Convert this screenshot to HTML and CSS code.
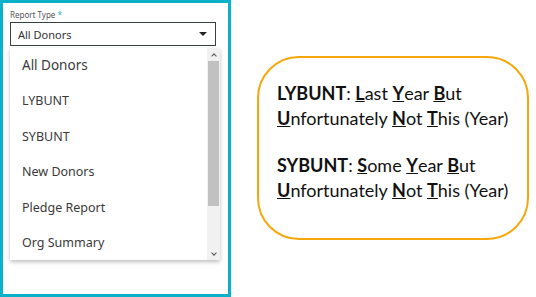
FILE: index.html
```html
<!DOCTYPE html>
<html lang="en">
<head>
    <meta charset="UTF-8">
    <meta name="viewport" content="width=device-width, initial-scale=1.0">
    <title>Report Type</title>
    <link rel="stylesheet" href="styles.css">
</head>
<body>

<div class="page">
    <!-- Report type picker -->
    <div class="panel">
        <label class="field-label">Report Type <span class="req">*</span></label>
        <div class="select">
            <span>All Donors</span>
            <span class="caret"></span>
        </div>
        <div class="menu">
            <ul class="options">
                <li>All Donors</li>
                <li>LYBUNT</li>
                <li>SYBUNT</li>
                <li>New Donors</li>
                <li>Pledge Report</li>
                <li>Org Summary</li>
            </ul>
            <div class="scrollbar">
                <div class="arrow up"></div>
                <div class="track"><div class="thumb"></div></div>
                <div class="arrow down"></div>
            </div>
        </div>
    </div>

    <!-- Acronym legend -->
    <div class="note">
        <div class="note-box">
            <p><b>LYBUNT</b>: <b><u>L</u></b>ast <b><u>Y</u></b>ear <b><u>B</u></b>ut<br>
               <b><u>U</u></b>nfortunately <b><u>N</u></b>ot <b><u>T</u></b>his (Year)</p>
            <p><b>SYBUNT</b>: <b><u>S</u></b>ome <b><u>Y</u></b>ear <b><u>B</u></b>ut<br>
               <b><u>U</u></b>nfortunately <b><u>N</u></b>ot <b><u>T</u></b>his (Year)</p>
        </div>
    </div>
</div>

</body>
</html>
```

FILE: styles.css
```css
body {
    margin: 0;
    background: #ffffff;
    font-family: "Noto Sans", Arial, sans-serif;
}
.page {
    display: flex;
    width: 536px;
    height: 297px;
}
.panel {
    width: 225px;
    height: 291px;
    border: 3px solid #0bb0c9;
    position: relative;
}
.field-label {
    display: block;
    margin: 7px 0 0 7px;
    font-size: 8px;
    color: #555;
    line-height: 10px;
}
.req {
    color: #12b5cf;
}
.select {
    margin: 2px 0 0 7px;
    width: 206px;
    height: 24px;
    border: 1.5px solid #37413f;
    display: flex;
    align-items: center;
    justify-content: space-between;
    padding: 0 7px;
    box-sizing: border-box;
    font-size: 11px;
    color: #333;
}
.caret {
    width: 0;
    height: 0;
    border-left: 4px solid transparent;
    border-right: 4px solid transparent;
    border-top: 4px solid #222;
    margin-right: 1px;
}
.menu {
    position: absolute;
    left: 7px;
    top: 45px;
    width: 210px;
    height: 212px;
    background: #fff;
    box-shadow: 0 2px 4px rgba(0, 0, 0, 0.25);
    display: flex;
}
.options {
    list-style: none;
    margin: 0;
    padding: 0;
    flex: 1;
}
.options li {
    height: 35.4px;
    line-height: 35.4px;
    padding-left: 12px;
    font-size: 12.5px;
    color: #3a3a3a;
}
.options li:first-child {
    font-size: 13.5px;
}
.scrollbar {
    width: 13px;
    background: #f1f1f1;
    display: flex;
    flex-direction: column;
}
.arrow {
    height: 13px;
    display: flex;
    align-items: center;
    justify-content: center;
}
.arrow::after {
    content: "";
    width: 3px;
    height: 3px;
    border-left: 1.2px solid #555;
    border-top: 1.2px solid #555;
}
.arrow.up::after {
    transform: translateY(1px) rotate(45deg);
}
.arrow.down::after {
    transform: translateY(-1px) rotate(225deg);
}
.track {
    flex: 1;
}
.thumb {
    height: 145px;
    margin: 0 1px;
    background: #c1c1c1;
}
.note {
    flex: 1;
    display: flex;
    align-items: center;
    padding-left: 26px;
}
.note-box {
    width: 272px;
    height: 184px;
    margin-top: -2px;
    border: 2px solid #f5a80b;
    border-radius: 42px;
    box-sizing: border-box;
    padding: 23px 0 0 18px;
    font-family: Lato, "Open Sans", sans-serif;
    font-size: 18px;
    line-height: 25px;
    color: #111;
}
.note-box p {
    margin: 0 0 22px 0;
}
```
